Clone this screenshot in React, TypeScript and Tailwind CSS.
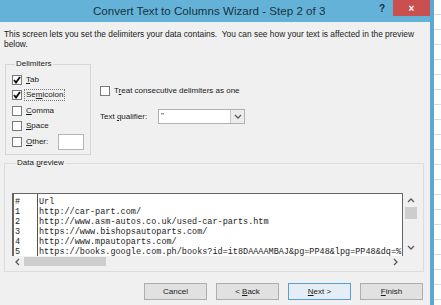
import React from "react";

const Chevron = ({ dir }: { dir: "up" | "down" | "left" | "right" }) => {
    const pts = {
        up: "1,5 4,2 7,5",
        down: "1,2 4,5 7,2",
        left: "5,1 2,4 5,7",
        right: "3,1 6,4 3,7",
    }[dir];
    return (
        <svg width="8" height="8" viewBox="0 0 8 8" className="block">
            <polyline points={pts} fill="none" stroke="#5a5a5a" strokeWidth="1.3" />
        </svg>
    );
};

const Check = ({ checked }: { checked?: boolean }) => (
    <span className="w-[10px] h-[10px] bg-white border border-[#7a7a7a] flex items-center justify-center shrink-0">
        {checked && (
            <svg width="8" height="8" viewBox="0 0 8 8">
                <polyline points="1,4 3,6.5 7,1" fill="none" stroke="#111" strokeWidth="1.9" />
            </svg>
        )}
    </span>
);

const rows = [
    ["#", "Url"],
    ["1", "http://car-part.com/"],
    ["2", "http://www.asm-autos.co.uk/used-car-parts.htm"],
    ["3", "https://www.bishopsautoparts.com/"],
    ["4", "http://www.mpautoparts.com/"],
    ["5", "https://books.google.com.ph/books?id=it8DAAAAMBAJ&pg=PP48&lpg=PP48&dq=%"],
];

export default function App() {
    return (
        <div className="flex w-[441px] h-[305px] overflow-hidden font-['Liberation_Sans',Arial,sans-serif] text-[#1a1a1a]">
            <div className="w-[430px] flex flex-col">
                {/* title bar */}
                <div className="h-[22px] bg-[#65b2d8] flex items-start shrink-0">
                    <div className="pl-[93px] pt-[4px] text-[11.6px] leading-[14px] text-[#17323f] flex-1">
                        Convert Text to Columns Wizard - Step 2 of 3
                    </div>
                    <div className="pt-[3px] w-[14px] text-[10px] font-bold text-[#17323f] leading-[12px]">?</div>
                    <div className="w-[37px] h-[16px] bg-[#c9504f] flex items-center justify-center text-white text-[10px] font-bold">
                        ×
                    </div>
                </div>

                {/* body */}
                <div className="flex-1 bg-[#f0f0f0] text-[8px] leading-[10px]">
                    <p className="pt-[7px] pl-[4px] pr-[16px] text-[8.4px]">
                        This screen lets you set the delimiters your data contains.&nbsp; You can see how your text is affected in the preview below.
                    </p>

                    <div className="flex mt-[10px]">
                        <fieldset className="ml-[5px] w-[86px] border border-[#d5d5d5] pl-[6px] pt-[3px] pb-[4px]">
                            <legend className="ml-[3px] px-[1px]">Delimiters</legend>
                            <div className="h-[15.5px] flex items-center gap-[4px]">
                                <Check checked />
                                <span><u>T</u>ab</span>
                            </div>
                            <div className="h-[15.5px] flex items-center gap-[4px]">
                                <Check checked />
                                <span className="outline-1 outline-dotted outline-[#777] px-[1px] -ml-[1px]">Se<u>m</u>icolon</span>
                            </div>
                            <div className="h-[15.5px] flex items-center gap-[4px]">
                                <Check />
                                <span><u>C</u>omma</span>
                            </div>
                            <div className="h-[15.5px] flex items-center gap-[4px]">
                                <Check />
                                <span><u>S</u>pace</span>
                            </div>
                            <div className="h-[16px] flex items-center gap-[4px]">
                                <Check />
                                <span className="w-[28px]"><u>O</u>ther:</span>
                                <span className="w-[26px] h-[16px] bg-white border border-[#b5b5b5]" />
                            </div>
                        </fieldset>

                        <div className="ml-[9px] pt-[27px]">
                            <div className="h-[10px] flex items-center gap-[4px]">
                                <Check />
                                <span>T<u>r</u>eat consecutive delimiters as one</span>
                            </div>
                            <div className="mt-[13px] h-[15px] flex items-center">
                                <span className="w-[58px]">Text <u>q</u>ualifier:</span>
                                <div className="w-[87px] h-[15px] bg-white border border-[#b0b0b0] flex">
                                    <span className="flex-1 pl-[2px] leading-[12px]">"</span>
                                    <span className="w-[14px] bg-[#ececec] border-l border-[#c8c8c8] flex items-center justify-center">
                                        <Chevron dir="down" />
                                    </span>
                                </div>
                            </div>
                        </div>
                    </div>

                    <fieldset className="ml-[4px] mt-[3px] w-[420px] border border-[#dcdcdc] pt-[25px] pl-[7px] pb-[4px]">
                        <legend className="ml-[4px] px-[1px]">Data <u>p</u>review</legend>
                        <div className="flex w-[406px] h-[74px]">
                            <div className="w-[391px] flex flex-col">
                                <div className="h-[63px] bg-white border-l-2 border-t border-r border-[#666] flex overflow-hidden font-['Liberation_Mono',monospace] text-[8.5px] leading-[10px] text-[#222]">
                                    <div className="w-[24px] pt-[3px] pl-[1px] border-r border-[#555]">
                                        {rows.map((r) => (
                                            <div key={r[0]}>{r[0]}</div>
                                        ))}
                                    </div>
                                    <div className="flex-1 pt-[3px] pl-[1px] whitespace-nowrap overflow-hidden">
                                        {rows.map((r) => (
                                            <div key={r[0]}>{r[1]}</div>
                                        ))}
                                    </div>
                                </div>
                                <div className="h-[11px] flex items-center">
                                    <span className="w-[12px] flex justify-center"><Chevron dir="left" /></span>
                                    <span className="w-[82px] h-[9px] bg-[#cdcdcd]" />
                                    <span className="flex-1" />
                                    <span className="w-[16px] flex justify-center"><Chevron dir="right" /></span>
                                </div>
                            </div>
                            <div className="w-[15px] h-[63px] flex flex-col items-center">
                                <span className="pt-[4px] h-[14px]"><Chevron dir="up" /></span>
                                <span className="w-[12px] h-[12px] bg-[#cdcdcd]" />
                                <span className="flex-1" />
                                <span className="pb-[4px]"><Chevron dir="down" /></span>
                            </div>
                        </div>
                    </fieldset>

                    <div className="flex justify-end gap-[9px] pr-[7px] mt-[11px]">
                        {[
                            <>Cancel</>,
                            <>{"< "}<u>B</u>ack</>,
                            <><u>N</u>ext{" >"}</>,
                            <><u>F</u>inish</>,
                        ].map((label, i) => (
                            <button
                                key={i}
                                className={`w-[63px] h-[17px] flex items-center justify-center whitespace-pre border ${i === 2 ? "border-[#5a9fd4] bg-[#e5eef7]" : "border-[#adadad] bg-[#e1e1e1]"}`}
                            >
                                {label}
                            </button>
                        ))}
                    </div>
                </div>
            </div>

            <div className="w-[4px] bg-[#5ba9d0] shrink-0" />

            <div className="flex-1 bg-white flex flex-col">
                {Array.from({ length: 21 }).map((_, i) => (
                    <div key={i} className="h-[15px] border-b border-[#dedede] shrink-0" />
                ))}
            </div>
        </div>
    );
}
